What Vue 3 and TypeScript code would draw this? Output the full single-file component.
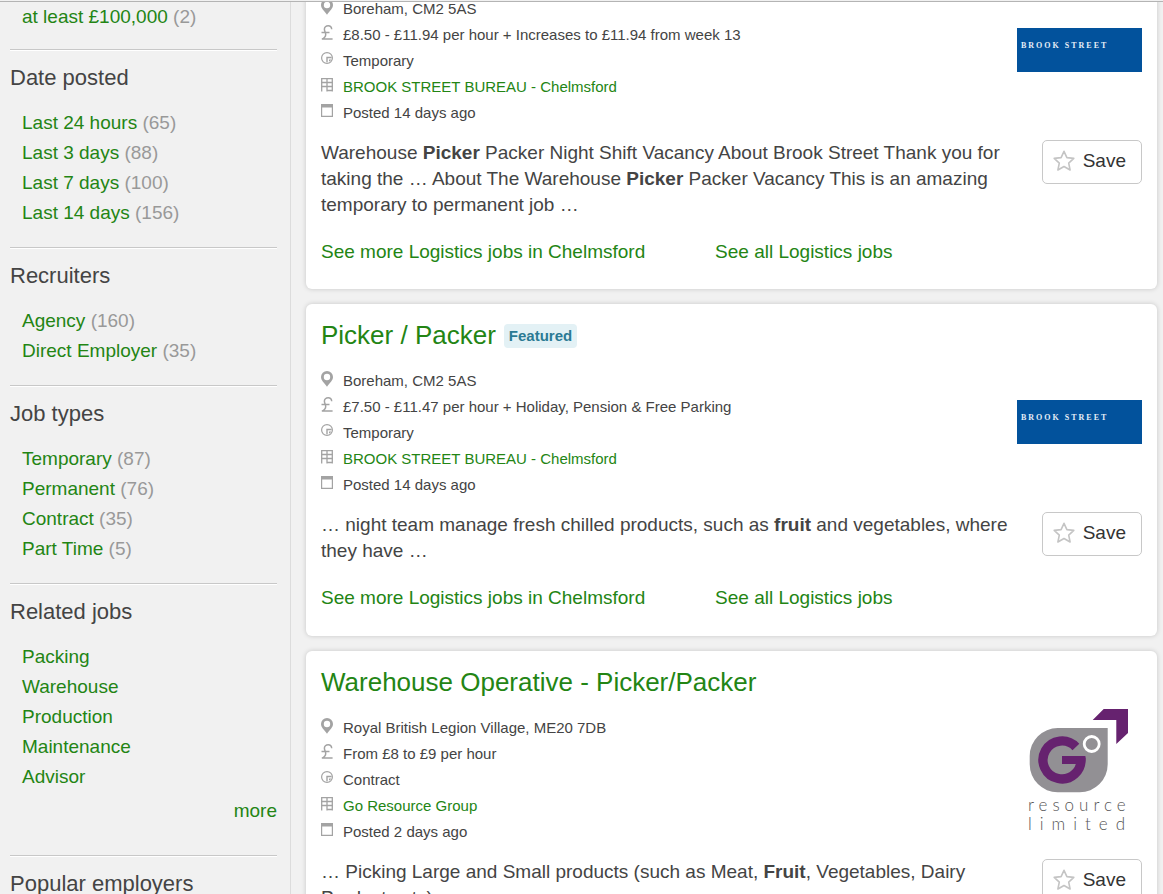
<script setup lang="ts">
interface Facet { label: string; count?: number }
interface Section { title: string; items: Facet[]; more?: boolean }
interface Part { text: string; bold?: boolean }
interface Job {
  title?: string
  featured?: boolean
  location: string
  salary: string
  type: string
  company: string
  posted: string
  logo: 'brook' | 'go'
  description: Part[]
}

const sections: Section[] = [
  { title: '', items: [{ label: 'at least £100,000', count: 2 }] },
  {
    title: 'Date posted',
    items: [
      { label: 'Last 24 hours', count: 65 },
      { label: 'Last 3 days', count: 88 },
      { label: 'Last 7 days', count: 100 },
      { label: 'Last 14 days', count: 156 },
    ],
  },
  {
    title: 'Recruiters',
    items: [
      { label: 'Agency', count: 160 },
      { label: 'Direct Employer', count: 35 },
    ],
  },
  {
    title: 'Job types',
    items: [
      { label: 'Temporary', count: 87 },
      { label: 'Permanent', count: 76 },
      { label: 'Contract', count: 35 },
      { label: 'Part Time', count: 5 },
    ],
  },
  {
    title: 'Related jobs',
    items: [
      { label: 'Packing' },
      { label: 'Warehouse' },
      { label: 'Production' },
      { label: 'Maintenance' },
      { label: 'Advisor' },
    ],
    more: true,
  },
  { title: 'Popular employers', items: [] },
]

const jobs: Job[] = [
  {
    location: 'Boreham, CM2 5AS',
    salary: '£8.50 - £11.94 per hour + Increases to £11.94 from week 13',
    type: 'Temporary',
    company: 'BROOK STREET BUREAU - Chelmsford',
    posted: 'Posted 14 days ago',
    logo: 'brook',
    description: [
      { text: 'Warehouse ' },
      { text: 'Picker', bold: true },
      { text: ' Packer Night Shift Vacancy About Brook Street Thank you for taking the … About The Warehouse ' },
      { text: 'Picker', bold: true },
      { text: ' Packer Vacancy This is an amazing temporary to permanent job …' },
    ],
  },
  {
    title: 'Picker / Packer',
    featured: true,
    location: 'Boreham, CM2 5AS',
    salary: '£7.50 - £11.47 per hour + Holiday, Pension & Free Parking',
    type: 'Temporary',
    company: 'BROOK STREET BUREAU - Chelmsford',
    posted: 'Posted 14 days ago',
    logo: 'brook',
    description: [
      { text: '… night team manage fresh chilled products, such as ' },
      { text: 'fruit', bold: true },
      { text: ' and vegetables, where they have …' },
    ],
  },
  {
    title: 'Warehouse Operative - Picker/Packer',
    location: 'Royal British Legion Village, ME20 7DB',
    salary: 'From £8 to £9 per hour',
    type: 'Contract',
    company: 'Go Resource Group',
    posted: 'Posted 2 days ago',
    logo: 'go',
    description: [
      { text: '… Picking Large and Small products (such as Meat, ' },
      { text: 'Fruit', bold: true },
      { text: ', Vegetables, Dairy Products etc)' },
    ],
  },
]
</script>

<template>
  <div class="page">
    <header class="topline"></header>
    <div class="columns">
      <aside class="sidebar">
        <section v-for="s in sections" :key="s.title" class="section" :class="{ plain: !s.title }">
          <h3 v-if="s.title">{{ s.title }}</h3>
          <ul>
            <li v-for="f in s.items" :key="f.label">
              <a href="#">{{ f.label }}</a>
              <span v-if="f.count" class="count">&nbsp;({{ f.count }})</span>
            </li>
          </ul>
          <div v-if="s.more" class="more"><a href="#">more</a></div>
        </section>
      </aside>

      <main class="results">
        <article v-for="(job, i) in jobs" :key="i" class="card" :class="{ continued: !job.title }">
          <div class="head">
            <div v-if="job.title" class="title">
              <h2><a href="#">{{ job.title }}</a></h2>
              <span v-if="job.featured" class="badge">Featured</span>
            </div>
            <ul class="meta">
              <li>
                <svg class="icon" width="12" height="16" viewBox="0 0 12 16"><path fill="#a3a3a3" fill-rule="evenodd" d="M6 0a6 6 0 0 1 6 6c0 3.600-3.200 5.600-6 9.800C3.200 11.600 0 9.600 0 6a6 6 0 0 1 6-6zm0 2.800a3.200 3.200 0 1 0 0 6.400 3.200 3.200 0 0 0 0-6.400z" /></svg>
                <span>{{ job.location }}</span>
              </li>
              <li>
                <svg class="icon" width="12" height="16" viewBox="0 0 12 16" fill="none" stroke="#a3a3a3" stroke-width="1.500"><path d="M10.700 4.200C10.500 2 9.200.8 7.200.8 4.900.8 3.400 2.200 3.400 4.200c0 2 1.300 3.200 1.300 5.300 0 2-1.100 3.500-3.800 4.600H11.600M.5 7.600h8" /></svg>
                <span>{{ job.salary }}</span>
              </li>
              <li>
                <svg class="icon" width="12" height="16" viewBox="0 0 12 16"><circle cx="6" cy="7" r="5.400" fill="none" stroke="#a3a3a3" stroke-width="1.200" /><path d="M6 11.200V6.500H10.600" fill="none" stroke="#a3a3a3" stroke-width="1.400" /><path d="M8 10.500V8.500H10.200L9.200 10z" fill="#a3a3a3" /></svg>
                <span>{{ job.type }}</span>
              </li>
              <li>
                <svg class="icon" width="12" height="16" viewBox="0 0 12 16" fill="none" stroke="#a3a3a3" stroke-width="1.300"><path d="M.7 14.400V1.600h10.600v12.800M0 5.500h12M0 9.500h12M6 1.500v12.900M6 13.500h5.500" /></svg>
                <a href="#">{{ job.company }}</a>
              </li>
              <li>
                <svg class="icon" width="12" height="16" viewBox="0 0 12 16"><path d="M.6 1.600h10.800v11.800H.6z" fill="none" stroke="#a3a3a3" stroke-width="1.200" /><path d="M0 1h12v3.500H0z" fill="#a3a3a3" /></svg>
                <span>{{ job.posted }}</span>
              </li>
            </ul>
            <div class="logo">
              <svg v-if="job.logo === 'brook'" width="125" height="44" viewBox="0 0 125 44" role="img" aria-label="Brook Street">
                <rect width="125" height="44" fill="#02529c" />
                <text class="brook" x="4" y="20">BROOK STREET</text>
              </svg>
              <svg v-else width="125" height="125" viewBox="0 0 125 125" role="img" aria-label="Go Resource Limited">
                <path d="M40.700 21H90.700V57.300a28 28 0 0 1-28 28H40.700a28 28 0 0 1-28-28V49a28 28 0 0 1 28-28z" fill="#929094" />
                <path d="M58.900 40A19 19 0 1 0 63.900 51" fill="none" stroke="#66226f" stroke-width="9.300" />
                <path d="M45 49h23.400c.3 3-.1 5.600-.8 8H45z" fill="#66226f" />
                <circle cx="74.700" cy="37" r="7.500" fill="#929094" stroke="#fff" stroke-width="2.800" />
                <path d="M75.700 13 86.700 2H111V26L99.300 37V13z" fill="#66226f" />
                <text class="go resource" x="11" y="104">resource</text>
                <text class="go limited" x="11" y="123">limited</text>
              </svg>
            </div>
          </div>
          <div class="body">
            <p>
              <template v-for="(p, k) in job.description" :key="k"><b v-if="p.bold">{{ p.text }}</b><template v-else>{{ p.text }}</template></template>
            </p>
            <button type="button" class="save">
              <svg width="22" height="22" viewBox="0 0 22 22" fill="none" stroke="#c4c4c4" stroke-width="1.600" stroke-linejoin="round"><path d="M11 1.300l2.900 6.300 6.900.8-5.100 4.700 1.400 6.900-6.100-3.500-6.100 3.500 1.400-6.900L1.200 8.400l6.900-.8z" /></svg>
              Save
            </button>
          </div>
          <nav class="links">
            <a href="#">See more Logistics jobs in Chelmsford</a>
            <a href="#">See all Logistics jobs</a>
          </nav>
        </article>
      </main>
    </div>
  </div>
</template>

<style>
body {
  margin: 0;
  background: #f1f1f1;
}
</style>

<style scoped>
.page {
  height: 100vh;
  overflow: hidden;
  font-family: "Liberation Sans", Arial, sans-serif;
  font-size: 19px;
  line-height: 26px;
  color: #444;
}
a {
  color: #238514;
  text-decoration: none;
}
ul {
  list-style: none;
  margin: 0;
  padding: 0;
}
h2, h3, p {
  margin: 0;
  font-weight: normal;
}
.topline {
  height: 1px;
  background: #f1f1f1;
  border-bottom: 1px solid #b4b4b4;
}
.columns {
  display: grid;
  grid-template-columns: 291px 1fr;
  overflow: hidden;
}
.sidebar {
  box-sizing: border-box;
  border-right: 1px solid #dcdcdc;
  padding: 0 13px 0 10px;
}
.section {
  border-top: 1px solid #c8c8c8;
  box-shadow: inset 0 1px #fff;
  padding: 13px 0 19px;
}
.section.plain {
  border-top: 0;
  box-shadow: none;
  padding: 0 0 17px;
}
.section h3 {
  font-size: 22px;
  line-height: 30px;
  margin-bottom: 15px;
}
.section ul {
  padding-left: 12px;
}
.section li,
.more {
  line-height: 30px;
}
.section li {
  display: flex;
}
.count {
  color: #999;
}
.more {
  text-align: right;
  margin: 4px 0 10px;
}
.results {
  display: flex;
  flex-direction: column;
  gap: 15px;
  padding: 0 6px 0 15px;
}
.card {
  background: #fff;
  border-radius: 6px;
  box-shadow: 0 0 5px rgba(0, 0, 0, 0.18);
  padding: 15px 15px 25px;
}
.card.continued {
  margin-top: -6px;
  padding-top: 0;
  padding-bottom: 24px;
}
.head {
  display: grid;
  grid-template-columns: 1fr 125px;
}
.title {
  display: flex;
  align-items: center;
  gap: 8px;
  margin-bottom: 17px;
}
.title h2 {
  font-size: 26px;
  line-height: 32px;
}
.badge {
  background: #e3f1f5;
  color: #2b7a94;
  border-radius: 4px;
  font-size: 15px;
  font-weight: bold;
  line-height: 24px;
  margin-top: 2px;
  padding: 0 5px;
}
.meta {
  grid-column: 1;
  font-size: 15px;
}
.meta li {
  display: flex;
  gap: 10px;
}
.icon {
  margin-top: 3px;
}
.logo {
  grid-column: 2;
  grid-row: 1 / span 2;
  align-self: center;
  padding-top: 27px;
}
.continued .logo {
  grid-row: 1;
  padding: 0 0 22px;
}
.logo svg {
  display: block;
}
.brook {
  font: bold 8px "Liberation Serif", serif;
  letter-spacing: 2px;
  fill: #e6eef7;
}
.go {
  font-family: Lato, sans-serif;
  font-weight: 300;
  font-size: 17px;
  fill: #555;
}
.resource {
  letter-spacing: 5px;
}
.limited {
  letter-spacing: 8px;
}
.body {
  display: grid;
  grid-template-columns: 1fr 125px;
  align-items: start;
  margin-top: 14px;
}
.save {
  justify-self: end;
  display: flex;
  align-items: center;
  gap: 8px;
  height: 44px;
  padding: 0 15px 2px 10px;
  background: #fff;
  border: 1px solid #c8c8c8;
  border-radius: 5px;
  font: inherit;
  color: #333;
}
.links {
  display: grid;
  grid-template-columns: 48% 52%;
  margin-top: 21px;
}
</style>
